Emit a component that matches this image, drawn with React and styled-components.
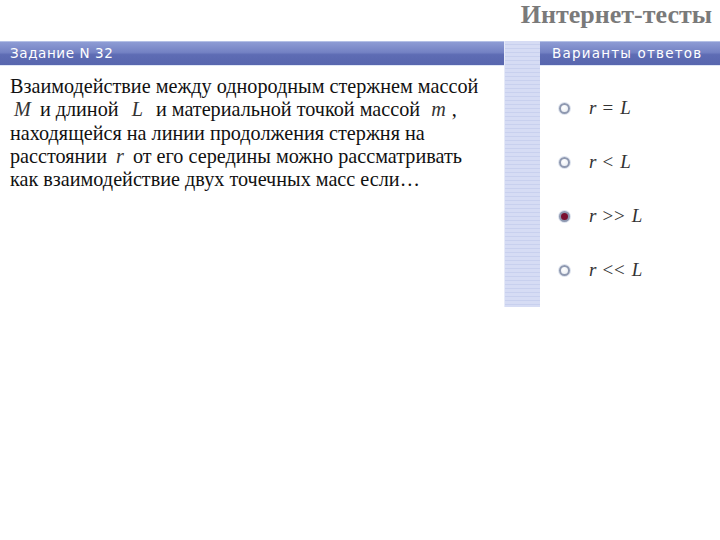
import React from 'react'
import styled, { createGlobalStyle } from 'styled-components'

const Global = createGlobalStyle`
  html, body { margin: 0; padding: 0; background: #fff; }
  body { width: 720px; height: 540px; overflow: hidden; }
`

const Page = styled.div`
  width: 720px;
  height: 540px;
  background: #fff;
`

const Top = styled.div`
  height: 41px;
  display: flex;
  justify-content: flex-end;
  align-items: flex-start;
  padding: 1px 8px 0 0;
  box-sizing: border-box;
`

const Brand = styled.div`
  font-family: "Liberation Serif", serif;
  font-weight: bold;
  font-size: 26px;
  color: #7a7a7a;
  line-height: 28px;
`

const Columns = styled.div`
  display: flex;
  align-items: flex-start;
`

const Panel = styled.div`
  width: ${p => p.w}px;
  flex: ${p => (p.w ? 'none' : '1')};
`

const Bar = styled.div`
  height: 25px;
  box-sizing: border-box;
  border-top: 1px solid #b4c0e6;
  background: linear-gradient(#8e9cd4 0%, #7482c4 45%, #5e6cb4 55%, #5866ae 100%);
  border-bottom: 1px solid #dfe6f6;
  color: #fff;
  font-family: "DejaVu Sans", sans-serif;
  font-size: 13.5px;
  line-height: 23px;
  padding-left: ${p => p.pad || 10}px;
  letter-spacing: ${p => p.ls || 0.6}px;
`

const Stripe = styled.div`
  width: 36px;
  height: 266px;
  background: repeating-linear-gradient(#d6dcf4 0px, #d6dcf4 3px, #c8d0ee 3px, #c8d0ee 4px);
  border-left: 1px solid #e6eaf8;
  box-sizing: border-box;
`

const Question = styled.div`
  font-family: "Liberation Serif", serif;
  font-size: 20.2px;
  line-height: 23.3px;
  color: #111;
  padding: 9px 0 0 10px;
  white-space: nowrap;
`

const Var = styled.i`
  font-family: "Liberation Serif", serif;
  font-style: italic;
  color: #333;
  margin: 0 ${p => p.m || 8}px;
`

const Options = styled.div`
  display: flex;
  flex-direction: column;
  gap: 30px;
  padding: 30px 0 0 19px;
`

const Option = styled.label`
  display: flex;
  align-items: center;
  height: 24px;
  gap: 19px;
`

const Radio = styled.span`
  width: 11px;
  height: 11px;
  border-radius: 50%;
  box-sizing: border-box;
  border: 2px solid #8e98b0;
  background: ${p => (p.on ? '#7a1030' : 'radial-gradient(circle at 40% 35%, #ffffff 0%, #e6eaf0 100%)')};
  box-shadow: 0 0 0 1px #dde3ee;
`

const Formula = styled.span`
  font-family: "Liberation Serif", serif;
  font-style: italic;
  font-size: 19px;
  color: #333;
  letter-spacing: 1px;
`

const Op = styled.span`
  font-style: normal;
  margin: 0 6px 0 5px;
`

const options = [
  { op: '=', on: false },
  { op: '<', on: false },
  { op: '>>', on: true },
  { op: '<<', on: false },
]

export default function App() {
  return (
    <Page>
      <Global />
      <Top>
        <Brand>Интернет-тесты</Brand>
      </Top>
      <Columns>
        <Panel w={504}>
          <Bar>Задание N 32</Bar>
          <Question>
            Взаимодействие между однородным стержнем массой<br />
            <Var m={4}>M</Var> и длиной <Var>L</Var> и материальной точкой массой <Var m={6}>m</Var>,<br />
            находящейся на линии продолжения стержня на<br />
            расстоянии <Var m={4}>r</Var> от его середины можно рассматривать<br />
            как взаимодействие двух точечных масс если…
          </Question>
        </Panel>
        <Stripe />
        <Panel>
          <Bar pad={12} ls={1.2}>Варианты ответов</Bar>
          <Options>
            {options.map((o, i) => (
              <Option key={i}>
                <Radio on={o.on} />
                <Formula>r<Op>{o.op}</Op>L</Formula>
              </Option>
            ))}
          </Options>
        </Panel>
      </Columns>
    </Page>
  )
}
